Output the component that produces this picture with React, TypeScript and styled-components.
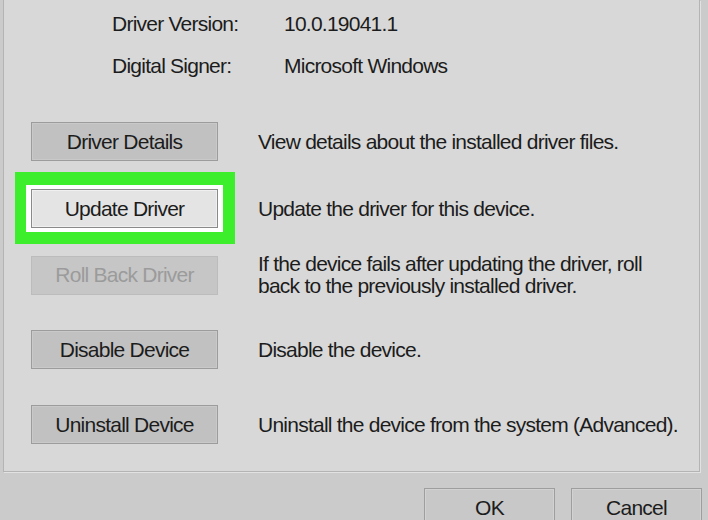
import styled, { createGlobalStyle } from "styled-components";

const GlobalStyle = createGlobalStyle`
  html, body {
    margin: 0;
    padding: 0;
    background: #cbcbcb;
  }
  body {
    font-family: "Liberation Sans", Arial, sans-serif;
    color: #1c1c1c;
  }
`;

const infoRows = [
  { label: "Driver Version:", value: "10.0.19041.1" },
  { label: "Digital Signer:", value: "Microsoft Windows" },
];

type Action = {
  label: string;
  desc: string[];
  spacing: number;
  disabled?: boolean;
  focused?: boolean;
};

const actions: Action[] = [
  { label: "Driver Details", desc: ["View details about the installed driver files."], spacing: 0 },
  { label: "Update Driver", desc: ["Update the driver for this device."], spacing: 28, focused: true },
  {
    label: "Roll Back Driver",
    desc: ["If the device fails after updating the driver, roll", "back to the previously installed driver."],
    spacing: 25,
    disabled: true,
  },
  { label: "Disable Device", desc: ["Disable the device."], spacing: 33 },
  { label: "Uninstall Device", desc: ["Uninstall the device from the system (Advanced)."], spacing: 36 },
];

export default function App() {
  return (
    <>
      <GlobalStyle />
      <Screen>
        <Panel>
          <InfoGrid>
            {infoRows.map((r) => (
              <InfoRow key={r.label}>
                <span>{r.label}</span>
                <span>{r.value}</span>
              </InfoRow>
            ))}
          </InfoGrid>

          <ActionList>
            {actions.map((a) => (
              <Row key={a.label} spacing={a.spacing}>
                {a.focused ? (
                  <Highlight>
                    <DialogButton focused>{a.label}</DialogButton>
                  </Highlight>
                ) : (
                  <DialogButton disabled={a.disabled}>{a.label}</DialogButton>
                )}
                <Desc>
                  {a.desc.map((line) => (
                    <span key={line}>{line}</span>
                  ))}
                </Desc>
              </Row>
            ))}
          </ActionList>
        </Panel>

        <Footer>
          <FooterButton>OK</FooterButton>
          <FooterButton>Cancel</FooterButton>
        </Footer>
      </Screen>
    </>
  );
}

const Screen = styled.div`
  width: 708px;
  height: 520px;
  overflow: hidden;
  background: #cbcbcb;
  display: flex;
  flex-direction: column;
`;

const Panel = styled.div`
  flex-shrink: 0;
  margin-left: 3px;
  width: 697px;
  height: 472px;
  box-sizing: border-box;
  background: #d8d8d8;
  border: 1px solid #b4b4b4;
  border-top: none;
  box-shadow: 1px 1px 0 #e2e2e2;
  padding: 12px 0 0 27px;
`;

const InfoGrid = styled.div`
  display: flex;
  flex-direction: column;
  gap: 18px;
  margin-left: 81px;
`;

const InfoRow = styled.div`
  display: grid;
  grid-template-columns: 172px auto;
  font-size: 21px;
  line-height: 24px;
  letter-spacing: -0.76px;
`;

const ActionList = styled.div`
  display: flex;
  flex-direction: column;
  margin-top: 44px;
`;

const Row = styled.div<{ spacing: number }>`
  display: grid;
  grid-template-columns: 187px 1fr;
  column-gap: 40px;
  align-items: center;
  margin-top: ${({ spacing }) => spacing}px;
`;

const Highlight = styled.div`
  margin: -17px -17px -16px -16px;
  border-style: solid;
  border-color: #3cee2b;
  border-width: 13px 12px 12px 11px;
  padding: 4px 5px;
  background: #ffffff;
`;

const DialogButton = styled.button<{ focused?: boolean }>`
  display: flex;
  align-items: center;
  justify-content: center;
  width: 187px;
  height: 39px;
  padding: 0;
  box-sizing: border-box;
  font-family: "Liberation Sans", Arial, sans-serif;
  font-size: 21px;
  letter-spacing: -0.76px;
  color: #1c1c1c;
  background: ${({ focused }) => (focused ? "#e4e4e4" : "#c1c1c1")};
  border: 1px solid ${({ focused }) => (focused ? "#8a8a8a" : "#9c9c9c")};
  box-shadow: inset 0 0 0 1px ${({ focused }) => (focused ? "#f0f0f0" : "#c9c9c9")};

  &:disabled {
    color: #9b9b9b;
    background: #c6c6c6;
    border-color: #bcbcbc;
    box-shadow: none;
  }
`;

const Desc = styled.div`
  display: flex;
  flex-direction: column;
  font-size: 21px;
  line-height: 22px;
  letter-spacing: -0.76px;
`;

const Footer = styled.div`
  display: flex;
  justify-content: flex-end;
  gap: 16px;
  margin-top: 16px;
  padding-right: 6px;
`;

const FooterButton = styled.button`
  flex-shrink: 0;
  width: 131px;
  height: 40px;
  box-sizing: border-box;
  padding: 0;
  font-family: "Liberation Sans", Arial, sans-serif;
  font-size: 21px;
  letter-spacing: -0.76px;
  color: #1c1c1c;
  background: #c8c8c8;
  border: 1px solid #9e9e9e;
  box-shadow: inset 0 0 0 1px #d2d2d2;
`;
